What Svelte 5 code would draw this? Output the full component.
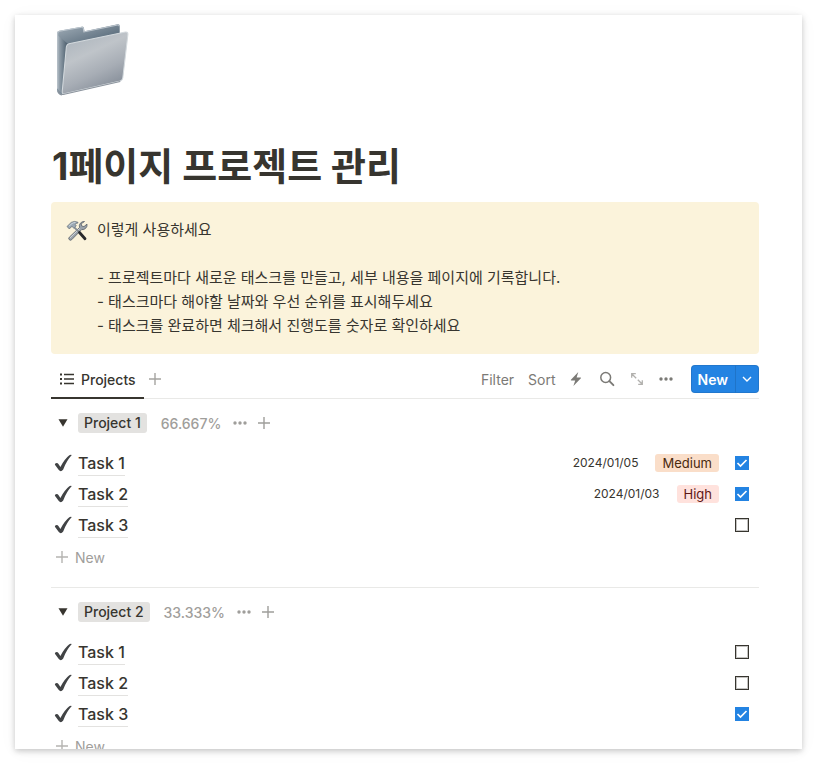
<script lang="ts">
	type Task = { name: string; done: boolean; date?: string; priority?: string };
	type Project = { name: string; progress: string; open: boolean; tasks: Task[] };

	const notes = [
		'프로젝트마다 새로운 태스크를 만들고, 세부 내용을 페이지에 기록합니다.',
		'태스크마다 해야할 날짜와 우선 순위를 표시해두세요',
		'태스크를 완료하면 체크해서 진행도를 숫자로 확인하세요'
	];

	let projects: Project[] = $state([
		{
			name: 'Project 1',
			progress: '66.667%',
			open: true,
			tasks: [
				{ name: 'Task 1', done: true, date: '2024/01/05', priority: 'Medium' },
				{ name: 'Task 2', done: true, date: '2024/01/03', priority: 'High' },
				{ name: 'Task 3', done: false }
			]
		},
		{
			name: 'Project 2',
			progress: '33.333%',
			open: true,
			tasks: [
				{ name: 'Task 1', done: false },
				{ name: 'Task 2', done: false },
				{ name: 'Task 3', done: true }
			]
		}
	]);

	function addTask(project: Project) {
		project.tasks.push({ name: 'Untitled', done: false });
	}
</script>

{#snippet plus()}
	<svg class="plus" viewBox="0 0 12 12" width="12" height="12" aria-hidden="true">
		<path d="M6 0v12M0 6h12" />
	</svg>
{/snippet}

{#snippet dots()}
	<svg class="dots" viewBox="0 0 14 4" width="14" height="4" aria-hidden="true">
		<circle cx="2" cy="2" r="1.7" /><circle cx="7" cy="2" r="1.7" /><circle cx="12" cy="2" r="1.7" />
	</svg>
{/snippet}

<main class="page">
	<svg class="cover-icon" viewBox="0 0 76 76" width="78" height="78" aria-hidden="true">
		<defs>
			<linearGradient id="back" x1="0" y1="0" x2="0.3" y2="1">
				<stop offset="0" stop-color="#a4b0ba" />
				<stop offset="0.4" stop-color="#5f7180" />
				<stop offset="1" stop-color="#8494a1" />
			</linearGradient>
			<linearGradient id="side" x1="0" y1="0" x2="1" y2="0">
				<stop offset="0" stop-color="#a3afb9" />
				<stop offset="1" stop-color="#4b5d6c" />
			</linearGradient>
			<linearGradient id="front" x1="0.1" y1="0" x2="0.6" y2="1">
				<stop offset="0" stop-color="#a9b2bb" />
				<stop offset="0.4" stop-color="#bfc4c9" />
				<stop offset="0.7" stop-color="#a7adb5" />
				<stop offset="1" stop-color="#858d98" />
			</linearGradient>
		</defs>
		<path d="M4 12q0-2 2-2.400L28 5.500q2-.3 2.200 1.500l.5 3L63 3.200q2-.4 2 1.600v8L14 70l-6 2.500q-4-1.500-4-5z" fill="url(#back)" />
		<path d="M4.500 14 14 22 10 70q-5.500-1-5.500-5z" fill="url(#side)" />
		<path d="M4.600 66V12q.2-1.600 1.600-1.900L28 6.200q1.300-.2 1.500.9l.6 3.600L63 3.900q1.300-.2 1.300 1.100" fill="none" stroke="#bec7cf" stroke-width="1" />
		<path d="M15.500 22.200 70.500 10.800q2.700-.5 2.500 2.200l-5 42.500q-.3 2.200-2.400 2.900L11 70.800q-2.300.5-2-2.200l4-43.400q.3-2.500 2.500-3z" fill="url(#front)" stroke="#d4dade" stroke-width="1" />
		<path d="M5 68q1 4 5 3.500L65.500 59" fill="none" stroke="#8d959e" stroke-width="1" />
	</svg>

	<h1>1페이지 프로젝트 관리</h1>

	<section class="callout">
		<svg class="tools" viewBox="0 0 22 22" width="22" height="22" aria-hidden="true">
			<path d="M18.500 1.500a4.700 4.700 0 0 0-5 6L3.300 17.200a1.700 1.700 0 0 0 2.400 2.500L15.600 9.600a4.700 4.700 0 0 0 5.400-5.500l-3 2.500-2.300-.6-.5-2.200z" fill="#9aa2aa" stroke="#5b6269" stroke-width=".8" />
			<path d="m4 17.900 9.700-9.600" stroke="#d7dde2" stroke-width=".9" />
			<path d="m8.500 7.700 6 5.800" stroke="#858d94" stroke-width="1.800" />
			<path d="m13.500 12.500 5.500 6.200" stroke="#292a2c" stroke-width="2.800" stroke-linecap="round" />
			<path d="M1 6.500 5.200 2.400Q8.500.5 12 2.300l-.2.8q-2 .1-2.700 1.300l1.200 1.600-2.400 2.200-1.700-1.500-1.100.2L3.400 9z" fill="#9ba8b4" stroke="#626c76" stroke-width=".7" />
			<path d="M3 6.200 6 3.500q1.500-1 3.500-1" fill="none" stroke="#dce3e9" stroke-width=".8" />
		</svg>
		<div>
			<p class="lead">이렇게 사용하세요</p>
			{#each notes as note}
				<p>- {note}</p>
			{/each}
		</div>
	</section>

	<nav class="toolbar">
		<button class="tab">
			<svg viewBox="0 0 14 12" width="14" height="12" aria-hidden="true">
				<path d="M4 1.500h10M4 6h10M4 10.500h10" stroke="currentColor" stroke-width="1.300" />
				<path d="M0 1.500h2M0 6h2M0 10.500h2" stroke="currentColor" stroke-width="1.800" />
			</svg>
			Projects
		</button>
		<button class="add-view" aria-label="Add view">{@render plus()}</button>

		<div class="actions">
			<button>Filter</button>
			<button>Sort</button>
			<button class="automations" aria-label="Automations">
				<svg viewBox="0 0 12 16" width="12" height="16" aria-hidden="true">
					<path d="M8.300 1 .9 8.700q-.4.700.4.700h3.900L3.400 15l7.500-7.700q.4-.7-.4-.7H6.600z" fill="currentColor" />
				</svg>
			</button>
			<button aria-label="Search">
				<svg viewBox="0 0 16 16" width="16" height="16" aria-hidden="true">
					<circle cx="6.700" cy="6.500" r="4.900" fill="none" stroke="currentColor" stroke-width="1.500" />
					<path d="m10.400 10.200 4 4" stroke="currentColor" stroke-width="1.900" stroke-linecap="round" />
				</svg>
			</button>
			<button class="expand" aria-label="Expand">
				<svg viewBox="0 0 12 12" width="12" height="12" aria-hidden="true">
					<path d="M4.800.7H.7v4.100M.7.700l4.500 4.500M7.200 11.300h4.100V7.200M11.300 11.300 6.800 6.800" fill="none" stroke="currentColor" stroke-width="1.300" />
				</svg>
			</button>
			<button aria-label="More options">{@render dots()}</button>
		</div>

		<div class="create">
			<button class="create-main">New</button>
			<button class="create-more" aria-label="Templates">
				<svg viewBox="0 0 10 6" width="10" height="6" aria-hidden="true">
					<path d="m1 1 4 4 4-4" fill="none" stroke="currentColor" stroke-width="1.400" />
				</svg>
			</button>
		</div>
	</nav>

	{#each projects as project, p}
		<section class="group">
			<header>
				<button class="toggle" aria-label="Toggle {project.name}" onclick={() => (project.open = !project.open)}>
					<svg class:closed={!project.open} viewBox="0 0 10 8" width="10" height="8" aria-hidden="true">
						<path d="M.5.300h9L5 7.700z" fill="currentColor" />
					</svg>
				</button>
				<h2>{project.name}</h2>
				<span class="progress">{project.progress}</span>
				<button class="group-more" aria-label="Group options">{@render dots()}</button>
				<button aria-label="Add to group" onclick={() => addTask(project)}>{@render plus()}</button>
			</header>

			{#if project.open}
				<ul>
					{#each project.tasks as task, t}
						<li>
							<svg class="mark" viewBox="0 0 18 18" width="18" height="18" aria-hidden="true">
								<path d="M.9 10.800q-.2-1.600 1.700-1.900 1.300 0 2 1.300l1.800 2.700Q10.300 5.200 15.300 1.200q1.300-.8 2.500-.2-5.200 5.600-8.600 14.400-2.300 3.200-4.400.6z" fill="#414345" />
							</svg>
							<label for="task-{p}-{t}">{task.name}</label>
							{#if task.date}
								<time>{task.date}</time>
							{/if}
							{#if task.priority}
								<span class="tag {task.priority.toLowerCase()}">{task.priority}</span>
							{/if}
							<input id="task-{p}-{t}" type="checkbox" bind:checked={task.done} />
						</li>
					{/each}
				</ul>
				<button class="new-task" onclick={() => addTask(project)}>{@render plus()} New</button>
			{/if}
		</section>
	{/each}
</main>

<style>
	:global(body) {
		margin: 0;
		background: #fff;
	}

	.page {
		box-sizing: border-box;
		height: calc(100vh - 30px);
		margin: 15px;
		padding: 6px 43px 0 36px;
		overflow: hidden;
		background: #fff;
		box-shadow: 0 2px 6px rgba(0, 0, 0, 0.22), 0 2px 20px rgba(0, 0, 0, 0.03);
		color: #37352f;
		font-family: Inter, 'Noto Sans CJK KR', sans-serif;
		font-size: 14px;
	}

	svg {
		display: block;
		flex: none;
	}

	button {
		display: flex;
		align-items: center;
		padding: 0;
		border: 0;
		background: none;
		color: inherit;
		font: inherit;
		cursor: pointer;
	}

	h1,
	h2,
	p,
	ul {
		margin: 0;
		padding: 0;
	}

	.cover-icon {
		margin-left: 2px;
	}

	h1 {
		margin: 43px 0 12px;
		padding-left: 1px;
		font-size: 38px;
		font-weight: 700;
		line-height: 48px;
	}

	.callout {
		display: flex;
		gap: 9px;
		padding: 16px 15px;
		border-radius: 4px;
		background: #fbf3db;
		font-size: 15px;
		line-height: 24px;
	}

	.tools {
		margin-top: 2px;
	}

	.lead {
		margin-bottom: 24px;
	}

	.plus {
		fill: none;
		stroke: currentColor;
		stroke-width: 1.4;
	}

	.dots {
		fill: currentColor;
	}

	.toolbar {
		display: flex;
		align-items: center;
		height: 44px;
		border-bottom: 1px solid #e9e9e7;
	}

	.tab {
		gap: 7px;
		align-self: flex-end;
		height: 38px;
		margin-bottom: -1px;
		padding: 0 8px 0 9px;
		border-bottom: 2px solid #37352f;
		font-weight: 500;
	}

	.add-view {
		margin: 6px 0 0 5px;
		color: #a5a4a0;
	}

	.actions {
		display: flex;
		gap: 14px;
		height: 28px;
		margin: 6px 18px 0 auto;
		color: #7b7a76;
	}

	.automations {
		margin-right: 3px;
	}

	.expand {
		margin: 0 2px;
		color: #b2b1ae;
	}

	.create {
		display: flex;
		height: 28px;
		margin-top: 6px;
		border-radius: 4px;
		background: #2383e2;
		box-shadow: inset 0 0 0 1px rgba(15, 15, 15, 0.1);
		color: #fff;
	}

	.create-main {
		padding: 0 7px;
		font-weight: 600;
	}

	.create-more {
		padding: 0 7px 0 6px;
		border-left: 1px solid #1f74c8;
	}

	.group + .group {
		margin-top: 13px;
		border-top: 1px solid #e9e9e7;
	}

	header {
		display: flex;
		align-items: center;
		height: 48px;
		color: #9f9e9b;
	}

	.toggle {
		margin: 0 10px 0 7px;
		color: #37352f;
	}

	.closed {
		transform: rotate(-90deg);
	}

	h2 {
		padding: 0 6px;
		border-radius: 3px;
		background: #e3e2e0;
		color: #37352f;
		font-size: 14px;
		font-weight: 500;
		line-height: 20px;
	}

	.progress {
		margin-left: 14px;
		font-weight: 500;
	}

	.group-more {
		margin: 0 11px 0 12px;
	}

	ul {
		list-style: none;
	}

	li {
		display: flex;
		align-items: center;
		height: 31px;
		padding: 0 10px 0 3px;
	}

	.mark {
		margin-right: 6px;
	}

	label {
		margin: 2px auto 0 0;
		border-bottom: 1px solid #e3e2e0;
		font-size: 16px;
		font-weight: 500;
		line-height: 24px;
	}

	time {
		font-size: 12px;
	}

	.tag {
		margin: 0 16px 0 17px;
		padding: 0 7px;
		border-radius: 3px;
		font-size: 13px;
		line-height: 18px;
	}

	.medium {
		background: #fadec9;
		color: #49290e;
	}

	.high {
		background: #ffe2dd;
		color: #5d1715;
	}

	input {
		appearance: none;
		width: 14px;
		height: 14px;
		margin: 0;
		border: 1px solid #37352f;
		box-shadow: inset 0 0 0 1px #c3c2c0;
	}

	input:checked {
		border: 0;
		background: #2383e2
			url("data:image/svg+xml,%3Csvg xmlns='http://www.w3.org/2000/svg' viewBox='0 0 14 14'%3E%3Cpath d='M2.500 7l3 3L11.500 4' fill='none' stroke='white' stroke-width='1.700'/%3E%3C/svg%3E");
		box-shadow: none;
	}

	.new-task {
		gap: 7px;
		height: 34px;
		padding-left: 5px;
		color: #9f9e9b;
	}

	.new-task .plus {
		stroke: #b5b4b1;
	}
</style>
